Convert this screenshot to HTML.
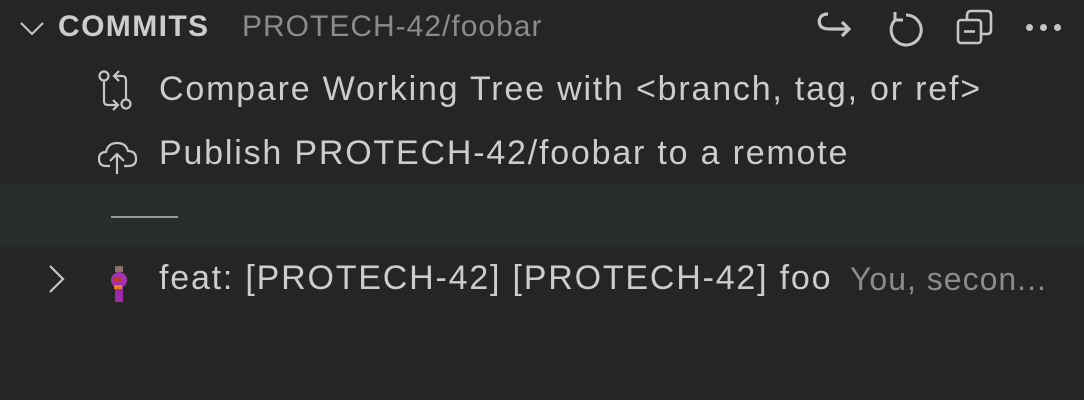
<!DOCTYPE html>
<html><head><style>
html,body{margin:0;padding:0;background:#252526;width:1084px;height:400px;overflow:hidden;font-family:"Liberation Sans",sans-serif;color:#cccccc}
.row{position:absolute;left:0;width:1084px;height:63px}
.t{position:absolute;white-space:nowrap;font-size:34px;letter-spacing:1.8px;line-height:63px}
svg{position:absolute}
</style></head><body>
<svg style="left:18px;top:14px" width="28" height="28" viewBox="0 0 28 28"><path d="M3 9 L14 20 L25 9" fill="none" stroke="#c5c5c5" stroke-width="2"/></svg>
<div class="t" style="left:58px;top:-5px;font-size:30px;letter-spacing:1.4px;font-weight:bold;color:#cccccc">COMMITS</div>
<div class="t" style="left:242px;top:-5px;font-size:30px;letter-spacing:1px;color:#8b8b8b">PROTECH-42/foobar</div>
<svg style="left:815px;top:8px" width="40" height="40" viewBox="0 0 40 40"><path d="M13 6 C5 6 3 12 5 17 C7 21 12 21 16 21 L34 21 M27 14 L34 21 L27 28" fill="none" stroke="#c5c5c5" stroke-width="3.2"/></svg>
<svg style="left:884px;top:8px" width="40" height="40" viewBox="0 0 40 40"><path d="M11 12 A15 15 0 1 0 22 7 M11 12 L11 4 M11 12 L19 12" fill="none" stroke="#c5c5c5" stroke-width="3"/></svg>
<svg style="left:955px;top:8px" width="40" height="40" viewBox="0 0 40 40"><rect x="3" y="12" width="23" height="23" rx="3" fill="none" stroke="#c5c5c5" stroke-width="2.6"/><path d="M12 11 V8 Q12 3 16 3 H32 Q36 3 36 7 V22 Q36 26 32 26 H27" fill="none" stroke="#c5c5c5" stroke-width="2.6"/><path d="M9 23.5 H20" stroke="#c5c5c5" stroke-width="2.6"/></svg>
<div style="position:absolute;left:1026px;top:24px;width:7px;height:7px;border-radius:50%;background:#c5c5c5"></div>
<div style="position:absolute;left:1040px;top:24px;width:7px;height:7px;border-radius:50%;background:#c5c5c5"></div>
<div style="position:absolute;left:1054px;top:24px;width:7px;height:7px;border-radius:50%;background:#c5c5c5"></div>

<svg style="left:96px;top:68px" width="42" height="44" viewBox="0 0 42 44"><circle cx="8" cy="8" r="4.5" fill="none" stroke="#c5c5c5" stroke-width="2.2"/><path d="M8 13 V33 Q8 37 12 37 H22 M17 32 L22 37 L17 42" fill="none" stroke="#c5c5c5" stroke-width="2.2"/><circle cx="30" cy="36" r="4.5" fill="none" stroke="#c5c5c5" stroke-width="2.2"/><path d="M30 31 V12 Q30 8 26 8 H18 M23 3 L18 8 L23 13" fill="none" stroke="#c5c5c5" stroke-width="2.2"/></svg>
<div class="t" style="left:159px;top:58px">Compare Working Tree with &lt;branch, tag, or ref&gt;</div>

<svg style="left:96px;top:136px" width="44" height="40" viewBox="0 0 44 40"><path d="M14 30 H10 Q3 30 3 23 Q3 16 10 16 Q12 7 21 7 Q30 7 32 15 Q40 15 40 23 Q40 30 32 30 H28" fill="none" stroke="#c5c5c5" stroke-width="2.2"/><path d="M21 38 V18 M14 25 L21 18 L28 25" fill="none" stroke="#c5c5c5" stroke-width="2.2"/></svg>
<div class="t" style="left:159px;top:122px">Publish PROTECH-42/foobar to a remote</div>

<div class="row" style="top:184px;background:#2a2d2e"></div>
<div style="position:absolute;left:111px;top:216px;width:67px;height:2px;background:#9a9a9a"></div>

<svg style="left:44px;top:262px" width="28" height="34" viewBox="0 0 28 34"><path d="M6 4 L19 17 L6 30" fill="none" stroke="#c5c5c5" stroke-width="2.2"/></svg>
<div style="position:absolute;left:107px;top:262px;width:22px;height:40px">
<div style="position:absolute;left:4px;top:10px;width:16px;height:16px;border-radius:50%;background:#a432b0"></div>
<div style="position:absolute;left:8px;top:22px;width:8px;height:18px;background:#9a2aa6"></div>
<div style="position:absolute;left:6px;top:15px;width:8px;height:5px;background:#c0392b"></div>
<div style="position:absolute;left:7px;top:23px;width:8px;height:4px;background:#e67e22"></div>
<div style="position:absolute;left:8px;top:4px;width:8px;height:6px;background:#8a7060"></div>
</div>
<div class="t" style="left:159px;top:247px">feat: [PROTECH-42] [PROTECH-42] foo</div>
<div class="t" style="left:850px;top:248px;font-size:32px;letter-spacing:1px;color:#8b8b8b">You, secon...</div>
</body></html>
